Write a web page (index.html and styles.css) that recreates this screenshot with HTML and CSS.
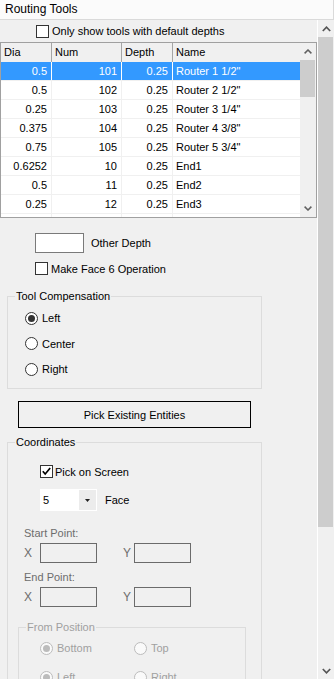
FILE: index.html
```html
<!DOCTYPE html>
<html>
<head>
<meta charset="utf-8">
<title>Routing Tools</title>
<link rel="stylesheet" href="styles.css">
</head>
<body>
<div class="title">Routing Tools</div>
<div class="main">
  <div class="content">
    <div class="topcheck"><span class="cb"></span><span>Only show tools with default depths</span></div>

    <div class="grid">
      <div class="gridbody">
        <div class="row head"><div class="c">Dia</div><div class="c">Num</div><div class="c">Depth</div><div class="c">Name</div></div>
        <div class="row sel"><div class="c r">0.5</div><div class="c r">101</div><div class="c r">0.25</div><div class="c">Router 1 1/2"</div></div>
        <div class="row"><div class="c r">0.5</div><div class="c r">102</div><div class="c r">0.25</div><div class="c">Router 2 1/2"</div></div>
        <div class="row"><div class="c r">0.25</div><div class="c r">103</div><div class="c r">0.25</div><div class="c">Router 3 1/4"</div></div>
        <div class="row"><div class="c r">0.375</div><div class="c r">104</div><div class="c r">0.25</div><div class="c">Router 4 3/8"</div></div>
        <div class="row"><div class="c r">0.75</div><div class="c r">105</div><div class="c r">0.25</div><div class="c">Router 5 3/4"</div></div>
        <div class="row"><div class="c r">0.6252</div><div class="c r">10</div><div class="c r">0.25</div><div class="c">End1</div></div>
        <div class="row"><div class="c r">0.5</div><div class="c r">11</div><div class="c r">0.25</div><div class="c">End2</div></div>
        <div class="row"><div class="c r">0.25</div><div class="c r">12</div><div class="c r">0.25</div><div class="c">End3</div></div>
        <div class="row"><div class="c r"></div><div class="c r"></div><div class="c r"></div><div class="c"></div></div>
      </div>
      <div class="vscroll inner">
        <div class="arrow"><svg width="8" height="5" viewBox="0 0 8 5"><polyline points="0.6,4.4 4,1 7.4,4.4" fill="none" stroke="#606060" stroke-width="1.5"/></svg></div>
        <div class="track"><div class="thumb"></div></div>
        <div class="arrow"><svg width="8" height="5" viewBox="0 0 8 5"><polyline points="0.6,0.6 4,4 7.4,0.6" fill="none" stroke="#606060" stroke-width="1.5"/></svg></div>
      </div>
    </div>

    <div class="depthrow"><span class="tb"></span><span class="lbl">Other Depth</span></div>
    <div class="facerow"><span class="cb"></span><span>Make Face 6 Operation</span></div>

    <fieldset class="group comp">
      <legend>Tool Compensation</legend>
      <div class="radios">
        <div class="radrow"><span class="rb on"></span><span>Left</span></div>
        <div class="radrow"><span class="rb"></span><span>Center</span></div>
        <div class="radrow"><span class="rb"></span><span>Right</span></div>
      </div>
    </fieldset>

    <div class="btn">Pick Existing Entities</div>

    <fieldset class="group coords">
      <legend>Coordinates</legend>
      <div class="coordin">
        <div class="pickrow"><span class="cb chk"><svg width="11" height="11" viewBox="0 0 11 11"><polyline points="1.8,5.2 4.2,8 9.2,2" fill="none" stroke="#000" stroke-width="1.7"/></svg></span><span>Pick on Screen</span></div>
        <div class="comborow">
          <div class="combo"><span class="val">5</span><span class="drop"><svg width="5" height="3" viewBox="0 0 5 3"><polygon points="0,0 5,0 2.5,3" fill="#222"/></svg></span></div>
          <span class="lbl">Face</span>
        </div>
        <div class="dlbl">Start Point:</div>
        <div class="xyrow"><span class="xl">X</span><span class="dtb"></span><span class="yl">Y</span><span class="dtb"></span></div>
        <div class="dlbl end">End Point:</div>
        <div class="xyrow"><span class="xl">X</span><span class="dtb"></span><span class="yl">Y</span><span class="dtb"></span></div>

        <fieldset class="group frompos">
          <legend>From Position</legend>
          <div class="fpin">
            <div class="fprow first"><div class="fpcell"><span class="rb dis on"></span><span>Bottom</span></div><div class="fpcell"><span class="rb dis"></span><span>Top</span></div></div>
            <div class="fprow"><div class="fpcell"><span class="rb dis on"></span><span>Left</span></div><div class="fpcell"><span class="rb dis"></span><span>Right</span></div></div>
          </div>
        </fieldset>
      </div>
    </fieldset>
  </div>

  <div class="vscroll outer">
    <div class="arrow"><svg width="9" height="6" viewBox="0 0 9 6"><polyline points="0.8,5 4.5,1.2 8.2,5" fill="none" stroke="#555" stroke-width="1.7"/></svg></div>
    <div class="track"><div class="thumb"></div></div>
    <div class="arrow"><svg width="9" height="6" viewBox="0 0 9 6"><polyline points="0.8,1 4.5,4.8 8.2,1" fill="none" stroke="#555" stroke-width="1.7"/></svg></div>
  </div>
</div>
</body>
</html>
```

FILE: styles.css
```css
* { box-sizing: border-box; }
html, body { margin: 0; padding: 0; height: 679px; overflow: hidden; }
body {
  width: 334px;
  background: #f0f0f0;
  font-family: "Liberation Sans", Arial, sans-serif;
  font-size: 11px;
  color: #000;
}
.title {
  height: 20px;
  background: #fbfbfb;
  border-bottom: 1px solid #dadada;
  border-right: 1px solid #dadada;
  font-size: 12px;
  line-height: 19px;
  padding-left: 5px;
}
.main { display: flex; height: 659px; }
.content { width: 317px; overflow: hidden; display: flex; flex-direction: column; flex: none; }
.content > *, .coordin > * { flex-shrink: 0; }

/* scrollbars */
.vscroll { display: flex; flex-direction: column; background: #f0f0f0; flex: none; }
.vscroll .arrow { height: 17px; display: flex; align-items: center; justify-content: center; flex: none; }
.vscroll .track { flex: 1; }
.vscroll .thumb { background: #cdcdcd; }
.outer { width: 17px; border-left: 1px solid #fff; }
.outer .thumb { height: 490px; margin-right: 1px; }
.inner { width: 16px; }
.inner .thumb { height: 37px; margin-right: 1px; }

/* checkbox / radio */
.cb {
  width: 13px; height: 13px; flex: none;
  border: 1px solid #333; background: #fff;
  display: flex; align-items: center; justify-content: center;
}
.rb {
  width: 13px; height: 13px; flex: none; border-radius: 50%;
  border: 1px solid #333; background: #fff;
  display: flex; align-items: center; justify-content: center;
}
.rb.on::after { content: ""; width: 7px; height: 7px; border-radius: 50%; background: #333; }
.rb.dis { border-color: #bcbcbc; background: #fafafa; }
.rb.dis.on::after { background: #bcbcbc; }

.topcheck { height: 22px; display: flex; align-items: center; gap: 3px; padding-left: 36px; }

/* grid */
.grid { width: 317px; height: 176px; border: 1px solid #a0a0a0; display: flex; background: #fff; }
.gridbody { width: 299px; height: 174px; overflow: hidden; flex: none; }
.row { display: grid; grid-template-columns: 51px 70px 51px 127px; height: 19px; border-bottom: 1px solid #f0f0f0; }
.row .c { border-right: 1px solid #f0f0f0; line-height: 18px; padding: 0 4px 0 3px; white-space: nowrap; overflow: hidden; }
.row .c:last-child { border-right: none; }
.row .c.r { text-align: right; }
.row.head { background: #f0f0f0; border-bottom: none; }
.row.head .c { border-right-color: #a5a5a5; line-height: 19px; }
.row.head .c:last-child { border-right: none; }
.row.sel { background: #3399ff; color: #fff; }
.row.sel .c { border-right-color: #fff; }
.row.sel .c:last-child { border-right: none; }

/* below grid */
.depthrow { margin-top: 15px; height: 20px; display: flex; align-items: center; padding-left: 35px; }
.tb { width: 49px; height: 20px; border: 1px solid #7a7a7a; background: #fff; }
.depthrow .lbl { margin-left: 7px; }
.facerow { margin-top: 9px; height: 13px; display: flex; align-items: center; gap: 3px; padding-left: 35px; }

.group { margin: 0; padding: 0; min-width: 0; border: 1px solid #dcdcdc; }
.group legend { padding: 0 1px; margin-left: 7px; line-height: 14px; }
.comp { margin: 14px 0 0 7px; width: 255px; }
.radios { display: flex; flex-direction: column; gap: 5.5px; padding: 5px 0 9px 17px; }
.radrow { height: 20px; display: flex; align-items: center; gap: 4px; }

.btn {
  margin: 12px 0 0 18px; width: 233px; height: 27px;
  border: 1px solid #000; background: #f0f0f0;
  display: flex; align-items: center; justify-content: center;
}

.coords { margin: 7px 0 0 7px; width: 255px; height: 300px; }
.coordin { padding-left: 16px; display: flex; flex-direction: column; }
.pickrow { margin-top: 16px; height: 13px; display: flex; align-items: center; gap: 2px; padding-left: 16px; }
.cb.chk svg { display: block; }
.comborow { margin-top: 11px; height: 22px; display: flex; align-items: center; padding-left: 16px; }
.combo { width: 57px; height: 22px; background: #fff; display: flex; align-items: stretch; }
.combo .val { flex: 1; line-height: 22px; padding-left: 3px; }
.combo .drop { width: 17px; margin: 1px; background: #ececec; display: flex; align-items: center; justify-content: center; }
.comborow .lbl { margin-left: 8px; }
.dlbl { margin-top: 15px; line-height: 14px; color: #6d6d6d; }
.dlbl.end { margin-top: 7px; }
.xyrow { margin-top: 3px; height: 20px; display: flex; align-items: center; color: #6d6d6d; font-size: 12px; }
.xl { width: 16px; }
.yl { width: 11px; margin-left: 26px; }
.dtb { width: 57px; height: 20px; border: 1px solid #6b6b6b; background: #f0f0f0; }

.frompos { margin: 13px 0 0 -6px; width: 228px; height: 120px; color: #a0a0a0; }
.fpin { padding-left: 21px; }
.fprow { height: 20px; display: flex; margin-top: 9px; }
.fprow.first { margin-top: 4px; }
.fpcell { width: 94px; display: flex; align-items: center; gap: 4px; }
```
